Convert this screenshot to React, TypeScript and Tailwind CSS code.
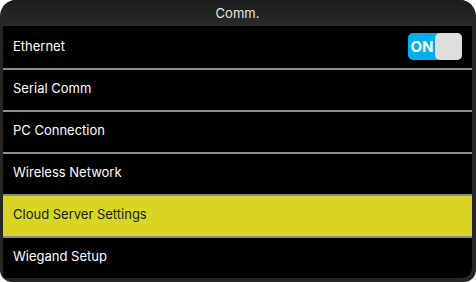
const ITEMS = ['Ethernet', 'Serial Comm', 'PC Connection', 'Wireless Network', 'Cloud Server Settings', 'Wiegand Setup']
const SELECTED = 4

function Toggle() {
  return (
    <div className="flex h-[27px] w-[54px] items-center rounded-[5px] bg-[#00aeef]">
      <span className="w-[27px] pl-[1px] text-center text-[15px] font-bold leading-none text-white">ON</span>
      <span className="h-[27px] w-[27px] rounded-[5px] bg-[#dedede]" />
    </div>
  )
}

export default function App() {
  return (
    <div className="h-[282px] w-[476px] bg-white" style={{ fontFamily: 'Inter, "Noto Sans", sans-serif' }}>
      <div className="flex h-full flex-col overflow-hidden rounded-[16px] rounded-b-[12px] bg-[#262626] pb-[4px] pl-[3px] pr-[4px]">
        <div className="flex h-[26px] shrink-0 items-center justify-center bg-gradient-to-b from-[#1c1c1c] to-[#2a2a2a] pt-[1px] text-[13px] text-[#e6e6e6]">
          Comm.
        </div>
        <div className="flex flex-1 flex-col overflow-hidden rounded-br-[10px] rounded-bl-[4px] bg-black">
          {ITEMS.map((label, i) => (
            <div key={label} className="flex shrink-0 flex-col">
              {i > 0 && <div className="h-[2px] bg-[#8c8c8c]" />}
              <div
                className={`flex items-center justify-between pl-[10px] pr-[10px] text-[13px] ${
                  i === 0 ? 'h-[42px] pb-[1px]' : 'h-[40px] pb-[2px]'
                } ${i === SELECTED ? 'bg-[#d8d524] text-[#1a1a1a]' : 'text-white'}`}
              >
                <span>{label}</span>
                {i === 0 && <Toggle />}
              </div>
            </div>
          ))}
        </div>
      </div>
    </div>
  )
}
